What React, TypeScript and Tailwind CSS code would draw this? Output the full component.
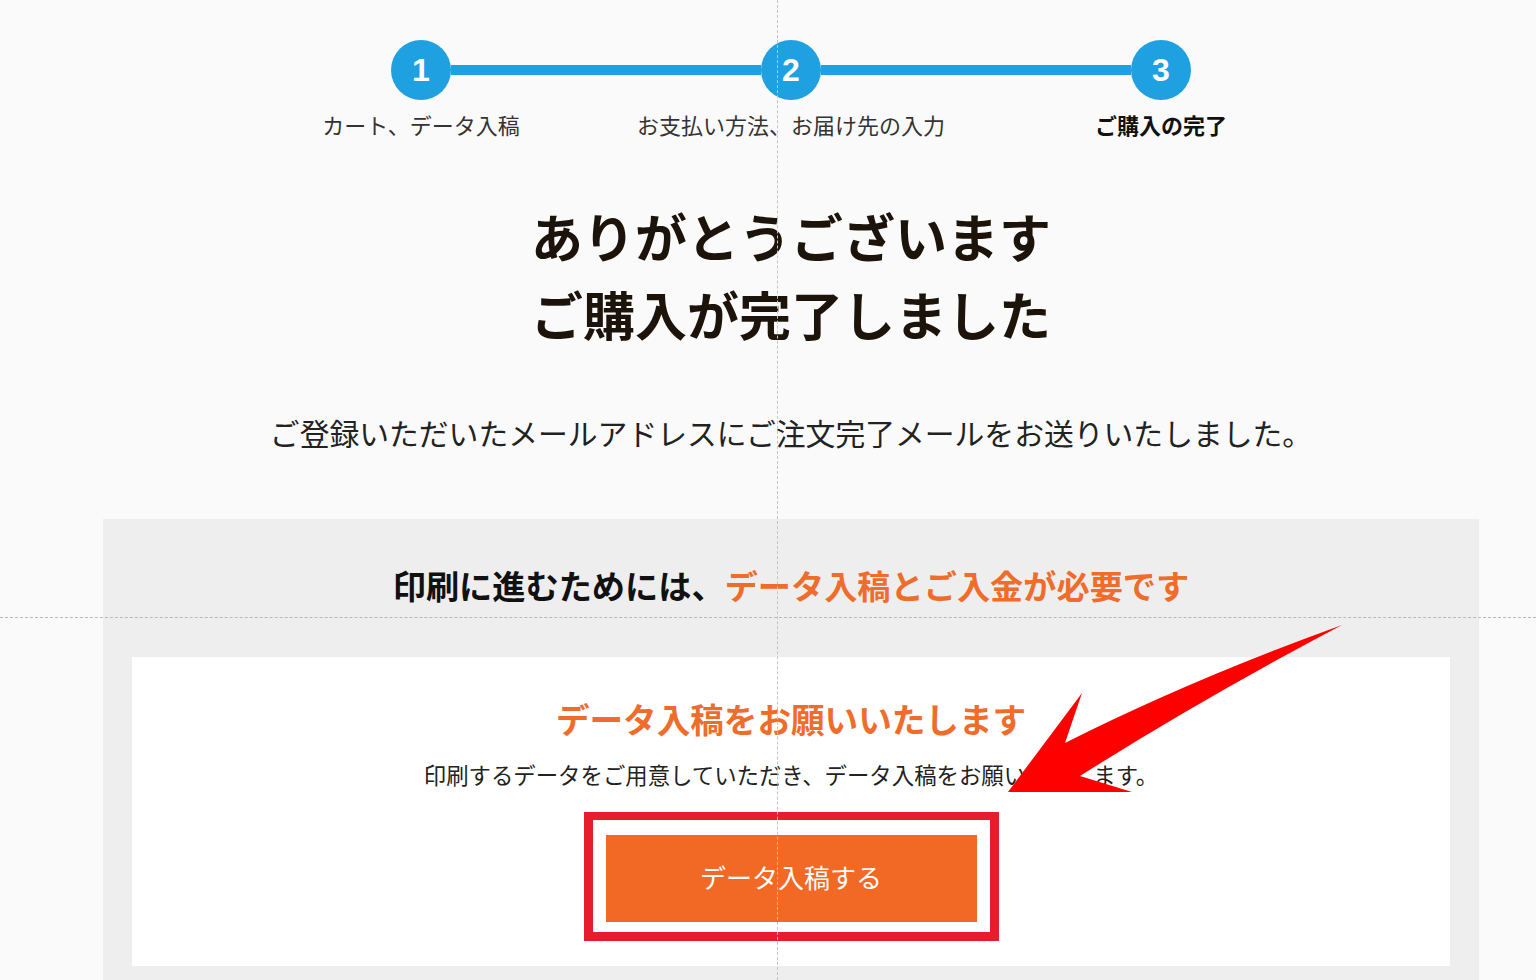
import React from "react";

const jp = { fontFamily: '"Noto Sans CJK JP", "Noto Sans", sans-serif' };

function Step({ n, label, bold }: { n: string; label: string; bold?: boolean }) {
  return (
    <div className="flex w-[60px] flex-col items-center">
      <div
        className="flex h-[60px] w-[60px] items-center justify-center rounded-full bg-[#1ea0e1] text-[32px] font-bold leading-none text-white"
        style={{ fontFamily: '"Liberation Sans", Arial, sans-serif' }}
      >
        {n}
      </div>
      <div
        className={`mt-[11px] whitespace-nowrap text-[22px] leading-[26px] ${
          bold ? "font-bold text-[#111111]" : "text-[#333333]"
        }`}
      >
        {label}
      </div>
    </div>
  );
}

export default function App() {
  return (
    <div className="relative h-[980px] overflow-hidden bg-[#fafafa]" style={jp}>
      <div className="ml-[103px] w-[1376px]">
        {/* stepper */}
        <div className="mx-auto flex w-[800px] items-start pt-[40px]">
          <Step n="1" label="カート、データ入稿" />
          <div className="mt-[25px] h-[10px] flex-1 bg-[#1ea0e1]" />
          <Step n="2" label="お支払い方法、お届け先の入力" />
          <div className="mt-[25px] h-[10px] flex-1 bg-[#1ea0e1]" />
          <Step n="3" label="ご購入の完了" bold />
        </div>

        <h1 className="mt-[60px] text-center text-[52px] font-bold leading-[78px] text-[#1c140b]">
          ありがとうございます
          <br />
          ご購入が完了しました
        </h1>

        <p className="mt-[59px] text-center text-[29.8px] leading-[40px] text-[#222222]">
          ご登録いただいたメールアドレスにご注文完了メールをお送りいたしました。
        </p>

        <div className="mt-[67px] bg-[#eeeeee] px-[29px] pb-[40px] pt-[44px]">
          <h2 className="text-center text-[33.2px] font-bold leading-[44px] text-[#111111]">
            印刷に進むためには、<span className="text-[#ef6c2b]">データ入稿とご入金が必要です</span>
          </h2>
          <div className="mt-[50px] flex flex-col items-center bg-white pb-[25px] pt-[40px]">
            <h3 className="text-center text-[33.6px] font-bold leading-[44px] text-[#ef6c2b]">
              データ入稿をお願いいたします
            </h3>
            <p className="mt-[18px] text-center text-[22.4px] leading-[30px] text-[#222222]">
              印刷するデータをご用意していただき、データ入稿をお願いいたします。
            </p>
            <div className="mt-[23px] border-[9px] border-t-[8px] border-[#e61e2b] px-[13px] pb-[10px] pt-[15px]">
              <button className="flex h-[87px] w-[371px] items-center justify-center bg-[#f26925] pb-[5px] text-[26px] text-white">
                データ入稿する
              </button>
            </div>
          </div>
        </div>
      </div>

      {/* guide lines */}
      <div className="pointer-events-none absolute left-[777px] top-0 h-full w-0 border-l border-dashed border-[#c4c4c4]" />
      <div className="pointer-events-none absolute left-0 top-[617px] h-0 w-full border-t border-dashed border-[#b8b8b8]" />

      {/* red arrow annotation */}
      <svg
        className="pointer-events-none absolute left-0 top-0"
        width="1536"
        height="980"
        viewBox="0 0 1536 980"
      >
        <path
          d="M1342 625 Q1190 680 1065 743 L1082 693 L1008 792 L1132 792 L1080 776 Q1200 700 1342 625 Z"
          fill="#ff0000"
        />
      </svg>
    </div>
  );
}
